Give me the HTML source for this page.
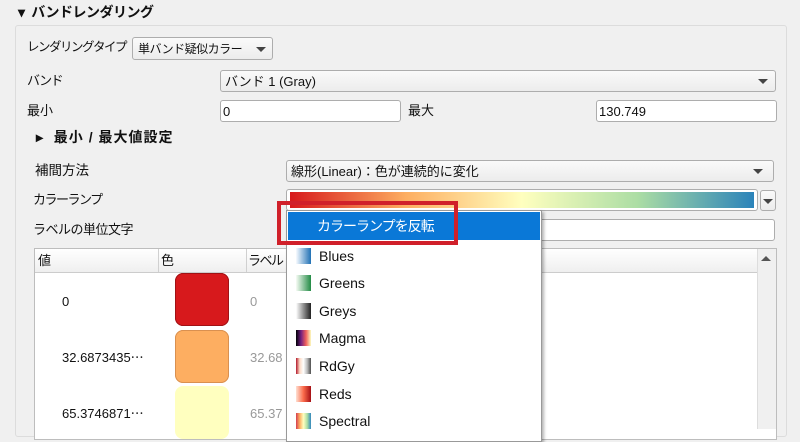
<!DOCTYPE html><html><head><meta charset="utf-8"><style>
body{margin:0;width:800px;height:428px;overflow:hidden;background:#f0f0f0;font-family:"Liberation Sans","Noto Sans CJK JP",sans-serif;font-size:13px;color:#111;position:relative}
.a{position:absolute}
.box{position:absolute;background:#fff;border:1px solid #adadad;border-radius:3px;box-sizing:border-box}
.cb{position:absolute;background:linear-gradient(#fafafa,#ececec);border:1px solid #adadad;border-radius:3px;box-sizing:border-box}
.arr{position:absolute;width:0;height:0;border-left:5px solid transparent;border-right:5px solid transparent;border-top:5px solid #444}
.t{position:absolute;line-height:16px;white-space:nowrap}
.k{letter-spacing:-1.5px}
.ic{position:absolute;left:9px;width:15px;height:16px}
.it{position:absolute;left:32px;font-size:14px}
</style></head><body>
<div class="t" style="left:18px;top:4px;font-weight:bold;font-size:14px;letter-spacing:-0.5px">▾&nbsp; バンドレンダリング</div>
<div class="a" style="left:15px;top:25px;width:770px;height:410px;border:1px solid #dcdcdc;border-radius:3px"></div>
<div class="t k" style="left:27px;top:39px;font-size:12.5px">レンダリングタイプ</div>
<div class="cb" style="left:132px;top:37px;width:141px;height:23px"><div class="t" style="left:5px;top:3px;font-size:12px;letter-spacing:-0.5px">単バンド疑似カラー</div><div class="arr" style="left:123px;top:9px"></div></div>
<div class="t k" style="left:27px;top:73px">バンド</div>
<div class="cb" style="left:220px;top:70px;width:556px;height:22px"><div class="t" style="left:4px;top:3px">バンド 1 (Gray)</div><div class="arr" style="left:537px;top:8px"></div></div>
<div class="t" style="left:27px;top:103px">最小</div>
<div class="box" style="left:220px;top:100px;width:181px;height:22px"><div class="t" style="left:2px;top:3px">0</div></div>
<div class="t" style="left:408px;top:103px">最大</div>
<div class="box" style="left:596px;top:100px;width:181px;height:22px"><div class="t" style="left:2px;top:3px">130.749</div></div>
<div class="t" style="left:36px;top:129px;font-weight:bold;font-size:14px;letter-spacing:1px">▸&nbsp; 最小 / 最大値設定</div>
<div class="t" style="left:35px;top:163px;font-size:13.5px">補間方法</div>
<div class="cb" style="left:286px;top:160px;width:488px;height:22px"><div class="t" style="left:4px;top:3px">線形(Linear)：色が連続的に変化</div><div class="arr" style="left:466px;top:8px"></div></div>
<div class="t k" style="left:33px;top:192px">カラーランプ</div>
<div class="box" style="left:286px;top:189px;width:472px;height:22px"><div class="a" style="left:3px;top:2px;width:464px;height:16px;background:linear-gradient(90deg,#d7191c,#fdae61 25%,#ffffbf 50%,#abdda4 75%,#2b83ba)"></div></div>
<div class="cb" style="left:760px;top:190px;width:16px;height:21px"><div class="arr" style="left:2px;top:8px"></div></div>
<div class="t" style="left:33px;top:222px;letter-spacing:-0.5px">ラベルの単位文字</div>
<div class="box" style="left:500px;top:219px;width:275px;height:22px"></div>
<div class="a" style="left:34px;top:248px;width:741px;height:190px;background:#fff;border:1px solid #bdbdbd"></div>
<div class="a" style="left:35px;top:249px;width:722px;height:23px;background:linear-gradient(#fff,#efefef);border-bottom:1px solid #ccc"></div>
<div class="a" style="left:158px;top:249px;width:1px;height:23px;background:#d0d0d0"></div>
<div class="a" style="left:246px;top:249px;width:1px;height:23px;background:#d0d0d0"></div>
<div class="t" style="left:38px;top:253px">値</div><div class="t" style="left:161px;top:253px">色</div><div class="t k" style="left:248px;top:253px">ラベル</div>
<div class="a" style="left:757px;top:249px;width:18px;height:180px;background:#f0f0f0;border-left:1px solid #ddd"></div>
<div class="a" style="left:761px;top:256px;border-left:5px solid transparent;border-right:5px solid transparent;border-bottom:5px solid #555"></div>
<div class="t" style="left:62px;top:294px">0</div>
<div class="t" style="left:62px;top:350px">32.6873435⋯</div>
<div class="t" style="left:62px;top:406px">65.3746871⋯</div>
<div class="a" style="left:175px;top:273px;width:54px;height:53px;border-radius:8px;background:#d7191c;box-shadow:inset 0 0 0 1px #a01215"></div>
<div class="a" style="left:175px;top:330px;width:54px;height:53px;border-radius:8px;background:#fdae61;box-shadow:inset 0 0 0 1px #d99050"></div>
<div class="a" style="left:175px;top:386px;width:54px;height:53px;border-radius:8px;background:#ffffbf"></div>
<div class="t" style="left:250px;top:294px;color:#999">0</div>
<div class="t" style="left:250px;top:350px;color:#999">32.68</div>
<div class="t" style="left:250px;top:406px;color:#999">65.37</div>
<div class="a" style="left:286px;top:210px;width:254px;height:230px;background:#fff;border:1px solid #999;box-shadow:2px 2px 3px rgba(0,0,0,.3)">
<div class="a" style="left:1px;top:1px;width:252px;height:28px;background:#0a78d7"><div class="t" style="left:29px;top:6px;color:#fff;font-size:14px;letter-spacing:-1px">カラーランプを反転</div></div>
<div class="ic" style="top:37px;background:linear-gradient(90deg,#f7fbff,#2171b5)"></div><div class="t it" style="top:37px">Blues</div>
<div class="ic" style="top:64px;background:linear-gradient(90deg,#f7fcf5,#238b45)"></div><div class="t it" style="top:64px">Greens</div>
<div class="ic" style="top:92px;background:linear-gradient(90deg,#fff,#222)"></div><div class="t it" style="top:92px">Greys</div>
<div class="ic" style="top:119px;background:linear-gradient(90deg,#000004,#721f81,#f1605d,#fcfdbf)"></div><div class="t it" style="top:119px">Magma</div>
<div class="ic" style="top:147px;background:linear-gradient(90deg,#b2182b,#fddbc7,#fff,#bababa,#4d4d4d)"></div><div class="t it" style="top:147px">RdGy</div>
<div class="ic" style="top:175px;background:linear-gradient(90deg,#fee0d2,#fb6a4a,#a50f15)"></div><div class="t it" style="top:175px">Reds</div>
<div class="ic" style="top:202px;background:linear-gradient(90deg,#d53e4f,#fdae61,#ffffbf,#abdda4,#3288bd)"></div><div class="t it" style="top:202px">Spectral</div>
</div>
<div class="a" style="left:277px;top:201px;width:181px;height:44px;box-sizing:border-box;border:4px solid #d0202a"></div>
</body></html>
